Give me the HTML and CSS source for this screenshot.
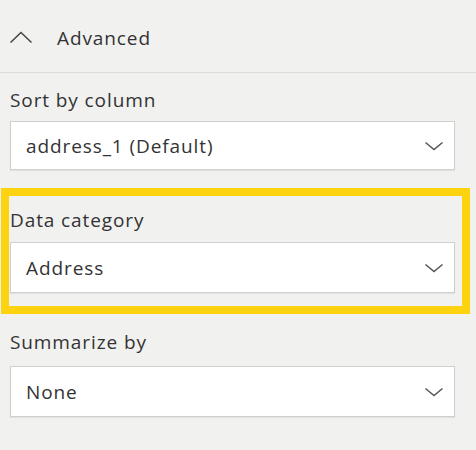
FILE: index.html
```html
<!DOCTYPE html>
<html>
<head>
<meta charset="utf-8">
<link rel="stylesheet" href="styles.css">
</head>
<body>
<div class="panel">
  <div class="header">
    <svg class="chev-up" width="24" height="13" viewBox="0 0 24 13"><polyline points="1.5,11.5 12,1.5 22.5,11.5" fill="none" stroke="#444" stroke-width="1.5"/></svg>
    <span class="header-title">Advanced</span>
  </div>
  <div class="body">
    <div class="field first">
      <div class="label">Sort by column</div>
      <div class="select">
        <span class="value">address_1 (Default)</span>
        <svg class="chev-down" width="20" height="10" viewBox="0 0 20 10"><polyline points="1.5,1.5 10,8.5 18.5,1.5" fill="none" stroke="#555" stroke-width="1.5"/></svg>
      </div>
    </div>
    <div class="highlight">
      <div class="label">Data category</div>
      <div class="select tall">
        <span class="value">Address</span>
        <svg class="chev-down" width="20" height="10" viewBox="0 0 20 10"><polyline points="1.5,1.5 10,8.5 18.5,1.5" fill="none" stroke="#555" stroke-width="1.5"/></svg>
      </div>
    </div>
    <div class="field last">
      <div class="label">Summarize by</div>
      <div class="select tall">
        <span class="value">None</span>
        <svg class="chev-down" width="20" height="10" viewBox="0 0 20 10"><polyline points="1.5,1.5 10,8.5 18.5,1.5" fill="none" stroke="#555" stroke-width="1.5"/></svg>
      </div>
    </div>
  </div>
</div>
</body>
</html>
```
FILE: styles.css
```css
html, body {
  margin: 0;
  padding: 0;
  background: #f1f1f0;
}
body {
  font-family: "Open Sans", "Noto Sans", sans-serif;
  color: #333333;
  width: 476px;
  height: 450px;
  overflow: hidden;
}
.header {
  height: 73px;
  border-bottom: 1px solid #dcdcdb;
  display: flex;
  align-items: center;
  padding-top: 3px;
  box-sizing: border-box;
}
.chev-up {
  margin-left: 9px;
  margin-right: 24px;
}
.header-title,
.label,
.value {
  font-size: 19px;
  line-height: 26px;
  letter-spacing: 0.9px;
}
.body {
  padding: 0 21px 0 10px;
}
.label {
  height: 26px;
}
.select {
  height: 49px;
  box-sizing: border-box;
  background: #ffffff;
  border: 1px solid #cfcfcf;
  box-shadow: 0 1px 1px rgba(0, 0, 0, 0.06);
  display: flex;
  align-items: center;
  justify-content: space-between;
  padding: 0 10px 0 15px;
}
.select.tall {
  height: 51px;
}
.field.first {
  padding-top: 14px;
}
.field.first .select {
  margin-top: 8px;
}
.highlight {
  margin-top: 18px;
  margin-left: -9px;
  width: 469px;
  box-sizing: border-box;
  border: 8px solid #fdd20f;
  padding: 11px 7px 13px 1px;
}
.highlight .select {
  margin-top: 9px;
}
.field.last {
  padding-top: 15px;
}
.field.last .select {
  margin-top: 11px;
}
```
